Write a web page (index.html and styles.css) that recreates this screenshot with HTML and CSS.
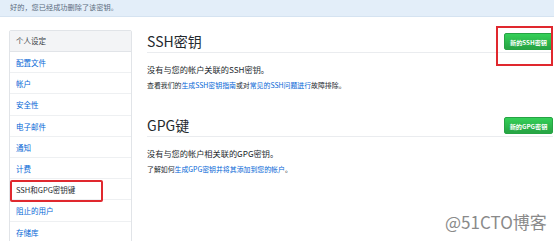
FILE: index.html
```html
<!DOCTYPE html>
<html lang="zh-CN">
<head>
  <meta charset="UTF-8">
  <title>SSH和GPG密钥</title>
  <link rel="stylesheet" href="styles.css">
</head>
<body>
  <div class="flash">好的，您已经成功删除了该密钥。</div>

  <div class="page">
    <!-- 左侧菜单 -->
    <div class="side">
      <div class="side-head">个人设定</div>
      <a class="side-item">配置文件</a>
      <a class="side-item">帐户</a>
      <a class="side-item">安全性</a>
      <a class="side-item">电子邮件</a>
      <a class="side-item">通知</a>
      <a class="side-item">计费</a>
      <a class="side-item selected">SSH和GPG密钥键</a>
      <a class="side-item">阻止的用户</a>
      <a class="side-item">存储库</a>
    </div>

    <!-- 主内容 -->
    <div class="main">
      <div class="subhead">
        <h2>SSH密钥</h2>
        <span class="btn marked">新的SSH密钥</span>
      </div>
      <p>没有与您的帐户关联的SSH密钥。</p>
      <p class="note">查看我们的<a>生成SSH密钥指南</a>或对<a>常见的SSH问题进行</a>故障排除。</p>

      <div class="subhead second">
        <h2>GPG键</h2>
        <span class="btn">新的GPG密钥</span>
      </div>
      <p>没有与您的帐户相关联的GPG密钥。</p>
      <p class="note">了解如何<a>生成GPG密钥并将其添加到您的帐户</a>。</p>
    </div>
  </div>

  <div class="watermark">@51CTO博客</div>
</body>
</html>
```

FILE: styles.css
```css
body {
  margin: 0;
  font-family: "Noto Sans CJK SC", "Noto Sans", sans-serif;
  color: #24292e;
  background: #fff;
  overflow: hidden;
}
.flash {
  height: 17px;
  line-height: 15px;
  padding-left: 10px;
  font-size: 7.2px;
  color: #5a6b7d;
  background: #e3eef9;
  border-bottom: 1px solid #d5e3f1;
  box-sizing: border-box;
}
.page {
  display: flex;
  gap: 15px;
  padding: 13px 1px 0 9px;
}
.side {
  width: 121px;
  flex-shrink: 0;
  border: 1px solid #e1e4e8;
  border-radius: 2px;
  font-size: 7.5px;
}
.side-head {
  height: 20px;
  line-height: 20px;
  padding-left: 6px;
  background: #f3f4f6;
  border-bottom: 1px solid #e1e4e8;
  color: #3b4147;
}
.side-item {
  display: block;
  height: 21.2px;
  line-height: 21px;
  padding-left: 6px;
  color: #0366d6;
  border-bottom: 1px solid #eef0f2;
  box-sizing: border-box;
}
.side-item.selected {
  color: #24292e;
  position: relative;
}
.side-item.selected::after {
  content: "";
  position: absolute;
  left: 0;
  top: 1px;
  width: 93px;
  height: 22px;
  border: 2px solid #e0282e;
  border-radius: 2px;
  box-sizing: border-box;
}
.main {
  flex: 1;
  font-size: 7px;
}
.subhead {
  display: flex;
  align-items: center;
  justify-content: space-between;
  height: 23px;
  border-bottom: 1px solid #eaecef;
  box-sizing: border-box;
}
.subhead.second {
  margin-top: 21px;
}
h2 {
  margin: 0;
  font-size: 14px;
  font-weight: 400;
  line-height: 22px;
}
.btn {
  height: 17px;
  line-height: 17px;
  width: 49px;
  text-align: center;
  font-size: 6.2px;
  font-weight: 700;
  color: #fff;
  background: linear-gradient(#34d058, #28a745 90%);
  border: 1px solid #26a344;
  border-radius: 2px;
  box-sizing: border-box;
}
.btn.marked {
  position: relative;
}
.btn.marked::after {
  content: "";
  position: absolute;
  left: -9px;
  top: -8px;
  width: 57px;
  height: 40px;
  border: 2px solid #e0282e;
  box-sizing: border-box;
}
p {
  margin: 8px 0 0;
  line-height: 16px;
  font-size: 8.2px;
}
p.note {
  margin-top: 0;
  font-size: 6.9px;
}
a {
  color: #0366d6;
  text-decoration: none;
}
.watermark {
  position: absolute;
  left: 445px;
  top: 209px;
  font-size: 17px;
  color: #8a8a8a;
  font-family: "Noto Sans CJK SC", sans-serif;
}
```
